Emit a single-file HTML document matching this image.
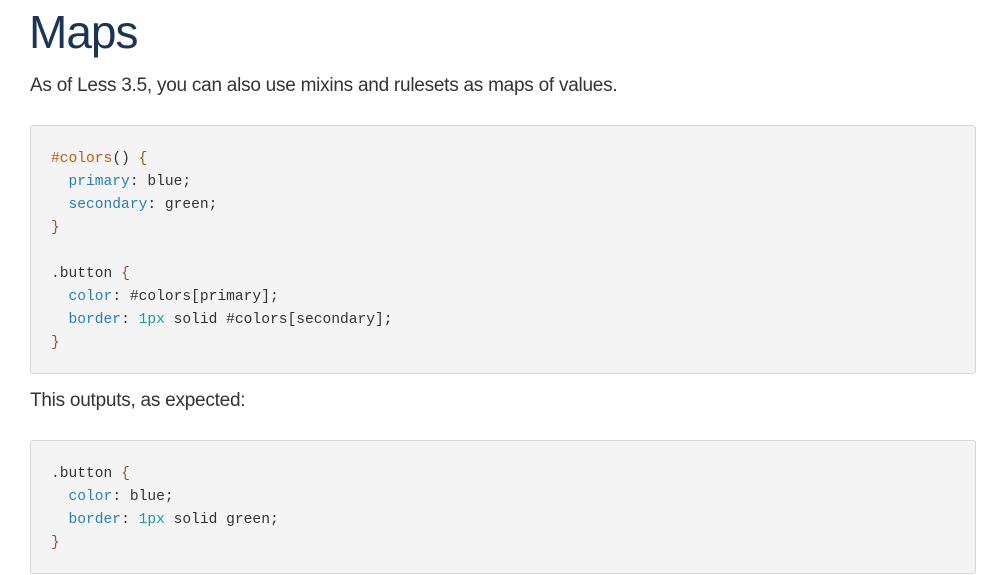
<!DOCTYPE html>
<html><head><meta charset="utf-8"><style>
body{margin:0;background:#fff;width:981px;height:575px;overflow:hidden;font-family:"Liberation Sans",sans-serif;}
h1{position:absolute;left:29px;top:3px;margin:0;font-size:46px;font-weight:normal;color:#1c3557;line-height:58px;letter-spacing:-1px}
p{position:absolute;left:30px;margin:0;font-size:19px;color:#333;line-height:24px;letter-spacing:-0.25px}
.code{position:absolute;left:30px;width:946px;background:#f4f4f4;border:1px solid #d6d6d6;border-radius:3px;box-sizing:border-box}
pre{margin:0;position:absolute;left:20px;font-family:"Liberation Mono",monospace;font-size:14.6px;line-height:23px;color:#333}
.o{color:#c35a14}.b{color:#2a7fb8}.n{color:#1a9c9c}.p{color:#8a5d2e}
</style></head><body>
<h1>Maps</h1>
<p style="top:74px">As of Less 3.5, you can also use mixins and rulesets as maps of values.</p>
<div class="code" style="top:125px;height:249px"><pre style="top:22px"><span class="o">#colors</span>() <span class="p">{</span>
  <span class="b">primary</span>: blue;
  <span class="b">secondary</span>: green;
<span class="p">}</span>

.button <span class="p">{</span>
  <span class="b">color</span>: #colors[primary];
  <span class="b">border</span>: <span class="n">1px</span> solid #colors[secondary];
<span class="p">}</span></pre></div>
<p style="top:389px">This outputs, as expected:</p>
<div class="code" style="top:440px;height:134px"><pre style="top:22px">.button <span class="p">{</span>
  <span class="b">color</span>: blue;
  <span class="b">border</span>: <span class="n">1px</span> solid green;
<span class="p">}</span></pre></div>
</body></html>
